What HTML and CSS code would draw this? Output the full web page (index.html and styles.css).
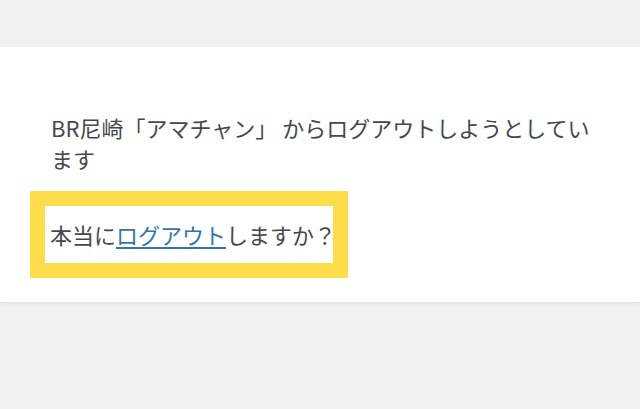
FILE: index.html
```html
<!DOCTYPE html>
<html lang="ja">
<head>
<meta charset="utf-8">
<title>ログアウト</title>
<link rel="stylesheet" href="styles.css">
</head>
<body>
  <div class="card">
    <p class="message">BR尼崎「アマチャン」 からログアウトしようとしています</p>
    <div class="highlight">
      <p class="confirm">本当に<a href="#" class="link">ログアウト</a>しますか？</p>
    </div>
  </div>
</body>
</html>
```

FILE: styles.css
```css
html, body {
  margin: 0;
  padding: 0;
}
body {
  background: #f0f0f1;
  font-family: "Noto Sans CJK JP", "Noto Sans", sans-serif;
  font-size: 22px;
  line-height: 31px;
  color: #44484d;
  height: 409px;
  overflow: hidden;
}
.card {
  margin-top: 47px;
  background: #fff;
  padding: 65px 30px 24px 30px;
  box-shadow: 0 2px 4px rgba(0, 0, 0, 0.06);
}
.message {
  margin: 0 0 17px 0;
  padding: 0 8px 0 21px;
}
.highlight {
  display: inline-block;
  border: 15px solid #fddd4c;
  background: #fff;
  padding: 13px 0 13px 5px;
  width: 283px;
}
.confirm {
  margin: 0;
  white-space: nowrap;
}
.link {
  color: #3474a8;
  text-decoration: underline;
  text-underline-offset: 3px;
}
```
